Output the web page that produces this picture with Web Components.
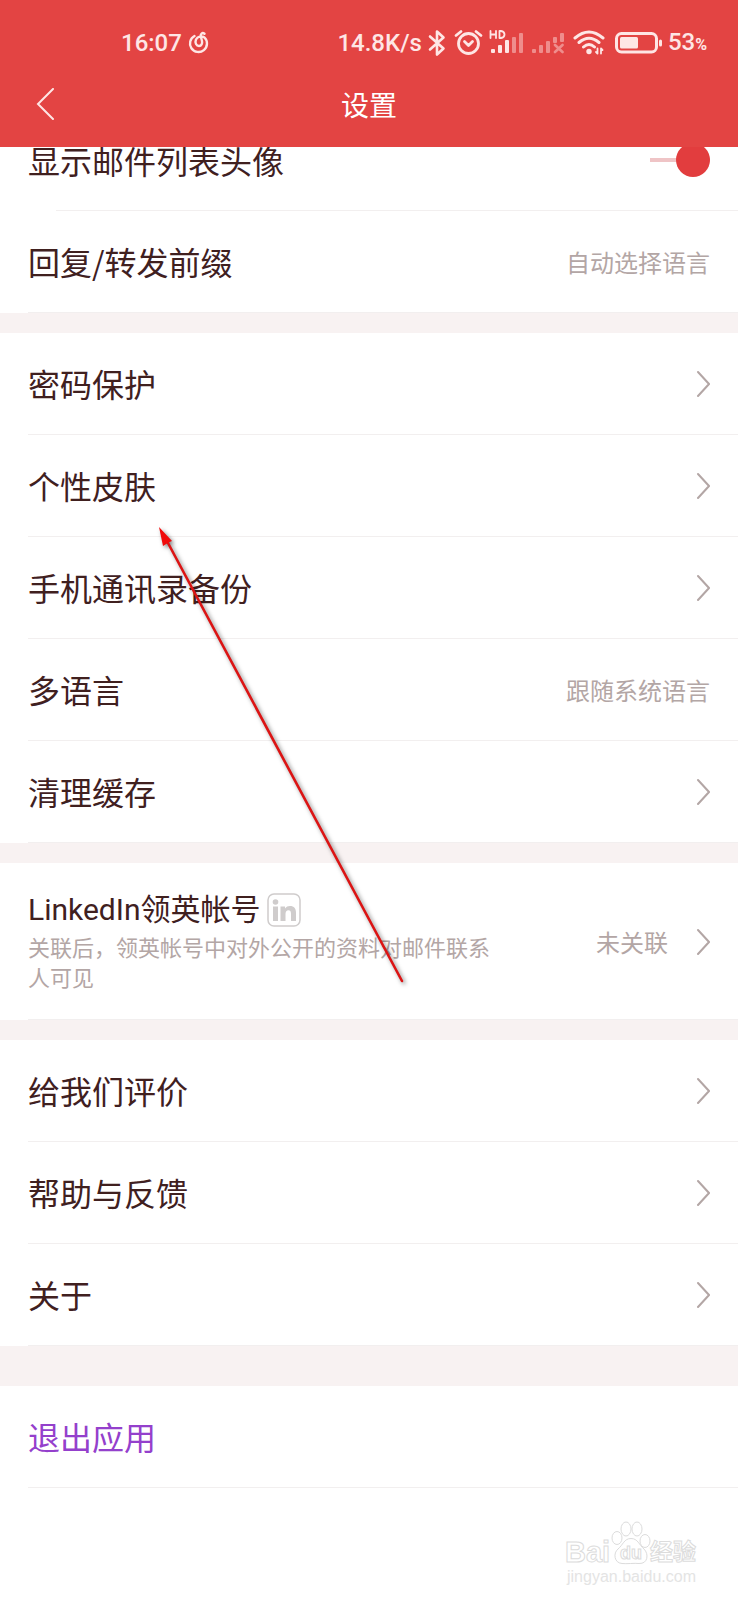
<!DOCTYPE html>
<html lang="zh-CN">
<head>
<meta charset="utf-8">
<meta name="viewport" content="width=device-width, initial-scale=1">
<title>设置</title>
<style>
  :root {
    --brand: #e34443;
    --on-brand: #fee6e5;
    --surface: #ffffff;
    --band: #f8f2f2;
    --divider: #f2efef;
    --text: #40201f;
    --muted: #b3a6a5;
    --accent: #9440cc;
  }
  body {
    margin: 0;
    position: relative;
    min-height: 100vh;
    background: var(--surface);
    color: var(--text);
    font-family: "Noto Sans CJK SC", sans-serif;
  }
</style>
</head>
<body>
<app-header heading="设置"></app-header>
<main>
  <settings-group class="scrolled">
    <settings-switch label="显示邮件列表头像"></settings-switch>
    <settings-row value="自动选择语言">回复/转发前缀</settings-row>
  </settings-group>
  <settings-group>
    <settings-row chevron>密码保护</settings-row>
    <settings-row chevron>个性皮肤</settings-row>
    <settings-row chevron>手机通讯录备份</settings-row>
    <settings-row value="跟随系统语言">多语言</settings-row>
    <settings-row chevron>清理缓存</settings-row>
  </settings-group>
  <settings-group>
    <settings-row chevron tall value="未关联">LinkedIn领英帐号<linkedin-badge slot="badge"></linkedin-badge><span slot="note">关联后，领英帐号中对外公开的资料对邮件联系人可见</span></settings-row>
  </settings-group>
  <settings-group class="wide-gap">
    <settings-row chevron>给我们评价</settings-row>
    <settings-row chevron>帮助与反馈</settings-row>
    <settings-row chevron>关于</settings-row>
  </settings-group>
  <settings-group class="last">
    <settings-row accent>退出应用</settings-row>
  </settings-group>
</main>
<brand-watermark></brand-watermark>
<pointer-arrow></pointer-arrow>

<script>
class BaseElement extends HTMLElement {
    constructor() {
        super();
        this._shadow = this.attachShadow({ mode: "open" });
    }

    connectedCallback() {
        const template = document.createElement("template");
        template.innerHTML = `<style>${this.styleTemplate}</style>${this.markup}`;
        this._shadow.replaceChildren(template.content.cloneNode(true));
    }
}

class StatusBar extends BaseElement {
    get styleTemplate() {
        return `
            :host {
              display: flex;
              justify-content: space-between;
              height: 38px;
              padding: 24px 31px 0 121px;
              color: var(--on-brand);
              font-family: Roboto, sans-serif;
              font-size: 24px;
              font-weight: 500;
              line-height: 38px;
            }
            div { display: flex; align-items: center; gap: 6px; white-space: nowrap; }
            svg { display: block; height: 36px; fill: none; stroke: currentColor; stroke-linecap: round; stroke-linejoin: round; }
            .solid { fill: currentColor; stroke: none; }
            .dim { opacity: 0.45; }
            small { font-size: 16px; font-weight: 700; }
        `;
    }

    get markup() {
        return `
          <div>
            <span>16:07</span>
            <svg width="22" height="36" viewBox="0 0 22 36" stroke-width="2.4" aria-hidden="true">
              <path d="M6.500 11A8.500 8.500 0 1 0 16.500 12.500C13.500 10.500 9.500 11.500 8 14.500C6.500 18 8.500 21 11 21C13.500 21 14.500 18.500 14 16L12.800 11.500C12.300 8.500 14.500 7.200 16.500 8.800"/>
            </svg>
          </div>
          <div>
            <span>14.8K/s</span>
            <svg width="19" height="36" viewBox="0 0 19 36" stroke-width="2.6" aria-hidden="true">
              <path d="M2 11.500L15.500 23.500L9 29.500V6.500L15.500 12.500L2 24.500"/>
            </svg>
            <svg width="30" height="36" viewBox="0 0 30 36" stroke-width="2.8" aria-hidden="true">
              <circle cx="15.500" cy="18.500" r="10"/>
              <path d="M11.500 16.500L15.500 20.500L19.500 16.500M3 10.500L8 6.500M28 10.500L23 6.500"/>
            </svg>
            <svg width="36" height="36" viewBox="0 0 36 36" aria-hidden="true">
              <path d="M1.500 6V13M7 6V13M1.500 9.500H7M10.500 6V13H12Q15.500 12.500 15.500 9.500T12 6Z" stroke-width="1.800"/>
              <g class="solid">
                <rect x="2" y="24" width="4" height="4" rx="1"/><rect x="9" y="20" width="4" height="8" rx="1"/><rect x="16" y="15" width="4" height="13" rx="1"/>
                <g class="dim"><rect x="23" y="12" width="4" height="16" rx="1"/><rect x="30" y="8" width="4" height="20" rx="1"/></g>
              </g>
            </svg>
            <svg width="34" height="36" viewBox="0 0 34 36" class="dim" aria-hidden="true">
              <g class="solid">
                <rect x="1" y="24" width="4" height="4" rx="1"/><rect x="8" y="20" width="4" height="8" rx="1"/><rect x="15" y="16" width="4" height="12" rx="1"/>
                <rect x="22" y="12" width="4" height="6" rx="1"/><rect x="29" y="8" width="4" height="9" rx="1"/>
              </g>
              <path d="M24 20L31.500 27M31.500 20L24 27" stroke-width="2.600"/>
            </svg>
            <svg width="35" height="36" viewBox="0 0 35 36" stroke-width="3" aria-hidden="true">
              <path d="M4 13Q18 1 32 13M8 17.500Q18 9 28 17.500M12.500 22Q18 17 23.500 22"/>
              <circle class="solid" cx="18" cy="26.500" r="2.700"/>
              <path d="M26.500 23.500V28.500L25 27M30 28.500V23.500L31.500 25" stroke-width="1.800"/>
            </svg>
            <svg width="50" height="36" viewBox="0 0 50 36" stroke-width="3" aria-hidden="true">
              <rect x="4.500" y="8.500" width="40" height="18.500" rx="5"/>
              <rect class="solid" x="8" y="12" width="18" height="11.500" rx="1.500"/>
              <path d="M48.500 16V20"/>
            </svg>
            <span>53<small>%</small></span>
          </div>
        `;
    }
}

class AppHeader extends BaseElement {
    get styleTemplate() {
        return `
            :host {
              display: block;
              position: sticky;
              top: 0;
              z-index: 1;
              background: var(--brand);
              color: #fff;
            }
            nav {
              display: grid;
              grid-template-columns: 64px 1fr 64px;
              align-items: center;
              height: 83px;
              padding: 0 12px 2px;
            }
            button {
              display: grid;
              place-items: center;
              height: 64px;
              padding: 0;
              border: 0;
              background: none;
              color: var(--on-brand);
            }
            h1 { margin: 0; font-size: 28px; font-weight: 400; line-height: 40px; text-align: center; }
        `;
    }

    get markup() {
        return `
          <status-bar></status-bar>
          <nav>
            <button type="button" aria-label="返回">
              <svg width="32" height="32" viewBox="0 0 32 32" fill="none" stroke="currentColor" stroke-width="2" stroke-linecap="round">
                <path d="M25 1L10 16L25 31"/>
              </svg>
            </button>
            <h1>${this.getAttribute("heading")}</h1>
          </nav>
        `;
    }
}

class SettingsGroup extends BaseElement {
    get styleTemplate() {
        return `
            :host { display: block; border-bottom: 20px solid var(--band); }
            :host(.scrolled) { margin-top: -38px; }
            :host(.wide-gap) { border-bottom-width: 40px; }
            :host(.last) { border-bottom: 0; }
        `;
    }

    get markup() {
        return `<slot></slot>`;
    }
}

class SettingsSwitch extends BaseElement {
    get styleTemplate() {
        return `
            :host { display: block; }
            .row {
              box-sizing: border-box;
              display: flex;
              align-items: center;
              justify-content: space-between;
              height: 102px;
              padding: 0 28px;
              background: linear-gradient(var(--divider), var(--divider)) 56px 100% / 100% 1px no-repeat;
            }
            label { font-size: 32px; line-height: 44px; }
            input {
              appearance: none;
              display: flex;
              align-items: center;
              width: 60px;
              height: 34px;
              margin: 0;
              background: linear-gradient(#efc4c6, #efc4c6) center / 100% 4px no-repeat;
            }
            input::before {
              content: "";
              width: 34px;
              height: 34px;
              border-radius: 50%;
              background: #e23d3e;
            }
            input:checked::before { margin-left: auto; }
        `;
    }

    get markup() {
        return `
          <div class="row">
            <label for="toggle">${this.getAttribute("label")}</label>
            <input id="toggle" type="checkbox" role="switch" checked>
          </div>
        `;
    }
}

class SettingsRow extends BaseElement {
    get styleTemplate() {
        return `
            :host { display: block; }
            button {
              box-sizing: border-box;
              display: flex;
              align-items: center;
              gap: 28px;
              width: 100%;
              height: 102px;
              padding: 0 28px;
              border: 0;
              background: linear-gradient(var(--divider), var(--divider)) 28px 100% / 100% 1px no-repeat;
              color: inherit;
              font: inherit;
              text-align: left;
            }
            :host([accent]) button { color: var(--accent); }
            .body { flex: 1; padding-bottom: 2px; }
            .title { display: flex; align-items: center; gap: 6px; font-size: 32px; line-height: 44px; }
            .note { display: block; max-width: 472px; color: var(--muted); font-size: 22px; line-height: 30px; }
            .value { color: var(--muted); font-size: 24px; line-height: 34px; }
            svg { display: block; color: var(--muted); }
            :host([tall]) button { height: 157px; }
            :host([tall]) .body { padding-bottom: 4px; }
            :host([tall]) .title { font-family: Roboto, "Noto Sans CJK SC", sans-serif; font-size: 30px; line-height: 42px; }
        `;
    }

    get markup() {
        const value = this.getAttribute("value");
        return `
          <button type="button">
            <span class="body">
              <span class="title"><span><slot></slot></span><slot name="badge"></slot></span>
              <span class="note"><slot name="note"></slot></span>
            </span>
            ${value ? `<span class="value">${value}</span>` : ""}
            ${this.hasAttribute("chevron") ? `
            <svg width="14" height="28" viewBox="0 0 14 28" fill="none" stroke="currentColor" stroke-width="2" stroke-linecap="round" aria-hidden="true">
              <path d="M2 2L13 14L2 26"/>
            </svg>` : ""}
          </button>
        `;
    }
}

class LinkedinBadge extends BaseElement {
    get styleTemplate() {
        return `
            :host { display: block; }
            svg { display: block; }
        `;
    }

    get markup() {
        return `
          <svg width="34" height="34" viewBox="0 0 34 34" fill="#cfcccc" role="img" aria-label="LinkedIn">
            <rect x="1" y="1" width="32" height="32" rx="6" fill="none" stroke="#cfcccc" stroke-width="1.500"/>
            <circle cx="8.500" cy="9" r="2.800"/>
            <path d="M6 13.500H11V28H6ZM13.500 13.500H18V15.500C19.200 13.800 20.800 13 23 13C27 13 29 15.500 29 20V28H24V20.800C24 18.300 23.200 17.200 21.500 17.200C19.500 17.200 18.500 18.500 18.500 21V28H13.500Z"/>
          </svg>
        `;
    }
}

class BrandWatermark extends BaseElement {
    get styleTemplate() {
        return `
            :host { display: flex; justify-content: flex-end; padding: 32px 40px 15px; }
            svg { display: block; fill: #fff; stroke: #dcdcdc; stroke-width: 1; font-family: "Liberation Sans", sans-serif; }
            .word { font-size: 29px; font-weight: 700; }
            .small { font-size: 18px; font-weight: 700; }
            .han { font-family: "Noto Sans CJK SC", sans-serif; font-size: 23px; font-weight: 700; }
            .url { font-size: 16px; fill: #e4e4e4; stroke: none; }
        `;
    }

    get markup() {
        return `
          <svg width="134" height="66" viewBox="0 0 134 66">
            <text class="word" x="1" y="42">Bai</text>
            <ellipse cx="53" cy="18" rx="5" ry="6.500"/>
            <ellipse cx="62" cy="9" rx="5" ry="7"/>
            <ellipse cx="73" cy="9" rx="5" ry="7"/>
            <ellipse cx="81" cy="21" rx="5" ry="6.500"/>
            <path d="M67 18.500C60 18.500 59 25 54 29C49 33 50 43 58 43.500C62 44 71 43 75 43.500C84 44 85 34 80 29C75 25 74 18.500 67 18.500Z"/>
            <text class="small" x="56" y="39">du</text>
            <text class="han" x="86" y="40">经验</text>
            <text class="url" x="3" y="62">jingyan.baidu.com</text>
          </svg>
        `;
    }
}

class PointerArrow extends BaseElement {
    get styleTemplate() {
        return `
            :host { position: absolute; top: 520px; left: 150px; z-index: 2; pointer-events: none; }
            svg { display: block; filter: drop-shadow(2px 2px 2px rgba(0, 0, 0, 0.5)); }
        `;
    }

    get markup() {
        return `
          <svg width="264" height="472" viewBox="0 0 264 472" aria-hidden="true">
            <path d="M18 23L252 461" stroke="#dc1414" stroke-width="2.600" stroke-linecap="round"/>
            <path d="M9 7L22 21L18.500 22.500L13 26Z" fill="#f00a0a"/>
          </svg>
        `;
    }
}

customElements.define("status-bar", StatusBar);
customElements.define("app-header", AppHeader);
customElements.define("settings-group", SettingsGroup);
customElements.define("settings-switch", SettingsSwitch);
customElements.define("settings-row", SettingsRow);
customElements.define("linkedin-badge", LinkedinBadge);
customElements.define("brand-watermark", BrandWatermark);
customElements.define("pointer-arrow", PointerArrow);
</script>
</body>
</html>
